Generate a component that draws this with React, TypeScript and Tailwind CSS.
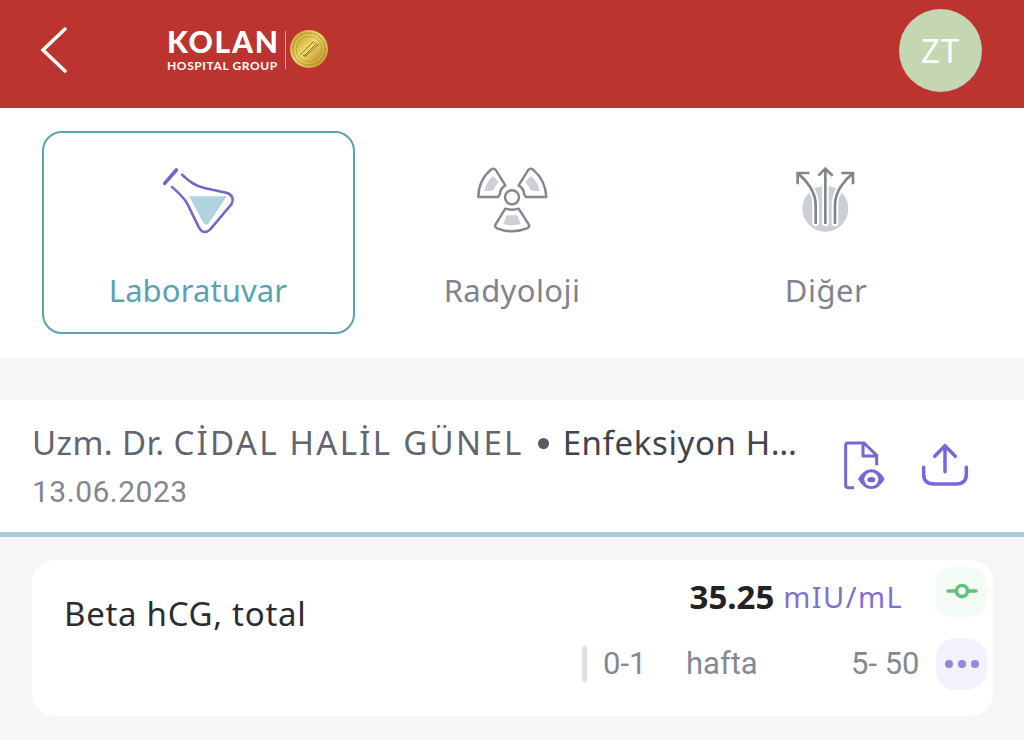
import React from "react";

const FlaskIcon = () => (
  <svg viewBox="54 41 240 210" className="w-20 h-[70px]" fill="none">
    <path d="M148 138H260L207 218Q198 228 190 218Z" fill="#b0d3dd" />
    <g stroke="#7565c6" strokeLinecap="round" strokeLinejoin="round">
      <path d="M74 99L109 59" strokeWidth="11" />
      <path
        d="M96 110C118 129 132 141 143 162L177 232Q191 255 210 238L274 162Q286 139 262 128L193 113C165 107 148 94 126 73"
        strokeWidth="7.5"
      />
    </g>
  </svg>
);

const RadiationIcon = () => (
  <svg viewBox="35 43 240 210" className="w-20 h-[70px]" fill="none">
    <g fill="#cdd0d5">
      <path d="M98 79L115 96L97 123L72 125Q76 98 98 79Z" />
      <path d="M212 79L195 96L213 123L238 125Q234 98 212 79Z" />
      <path d="M139 197H171L181 223Q155 231 129 223Z" />
    </g>
    <g stroke="#84898f" strokeWidth="7.5" strokeLinejoin="round">
      <path d="M92 60Q100 53 107 62L135 107Q119 117 119 133L113 142H54Q54 92 92 60Z" />
      <path d="M218 60Q210 53 203 62L175 107Q191 117 191 133L197 142H258Q256 92 218 60Z" />
      <path d="M135 177Q155 183 175 177L207 227Q207 233 200 236Q155 254 110 236Q104 233 104 227Z" />
      <circle cx="155" cy="143" r="21" />
    </g>
  </svg>
);

const ArrowsIcon = () => (
  <svg viewBox="48 43 240 210" className="w-20 h-[70px]" fill="none">
    <circle cx="166" cy="177" r="69" fill="#ccd0d6" />
    <g stroke="#fff" strokeWidth="20" strokeLinecap="round">
      <path d="M166 220V90" />
      <path d="M137 220V165C137 126 108 90 84 72" />
      <path d="M195 220V165C195 126 224 90 248 72" />
    </g>
    <g stroke="#80868d" strokeWidth="8">
      <path d="M166 223V59M145 78L166 57L188 78" />
      <path d="M137 223V165C137 126 108 90 84 72M83 104V70H118" />
      <path d="M195 223V165C195 126 224 90 248 72M249 104V70H214" />
    </g>
  </svg>
);

const DocumentIcon = () => (
  <svg viewBox="66 56 135 156" className="w-[45px] h-[52px]" fill="none">
    <path
      d="M102 202H84Q77 202 77 195V75Q77 68 84 68H132L170 105V135M129 69V107H168"
      stroke="#7768d1"
      strokeWidth="9"
      strokeLinejoin="round"
    />
    <path d="M114 176Q131 147 154 147T194 176Q177 206 154 206T114 176Z" fill="#7768d1" />
    <circle cx="154" cy="177" r="21" fill="#fff" />
    <ellipse cx="154" cy="178" rx="12" ry="8" fill="#7768d1" />
  </svg>
);

const UploadIcon = () => (
  <svg viewBox="301 66 150 138" className="w-[50px] h-[46px]" fill="none">
    <path
      d="M376 155V78M345 109L376 77L407 109M312 142V162Q312 192 342 192H410Q440 192 440 162V142"
      stroke="#7768d9"
      strokeWidth="10.5"
      strokeLinecap="round"
      strokeLinejoin="round"
    />
  </svg>
);

const SealIcon = () => (
  <svg viewBox="0 0 40 40" className="w-10 h-10" fill="none">
    <defs>
      <linearGradient id="gold" x1="0" y1="0" x2="1" y2="1">
        <stop offset="0" stopColor="#c79b28" />
        <stop offset="0.45" stopColor="#efdb6d" />
        <stop offset="1" stopColor="#c18b20" />
      </linearGradient>
    </defs>
    <circle cx="20" cy="20" r="19" fill="url(#gold)" />
    <circle cx="20" cy="20" r="16" stroke="#76571a" strokeWidth="1.8" strokeDasharray="1.2 1" opacity="0.5" />
    <circle cx="20" cy="20" r="13" fill="url(#gold)" stroke="#b68d29" strokeWidth="0.7" />
    <path d="M11 26L23 14Q25 12 26 14M15 27L28 14M14 26Q15 29 18 26L30 15" stroke="#92702a" strokeWidth="1" />
  </svg>
);

const tabs = [
  { label: "Laboratuvar", icon: <FlaskIcon />, active: true, text: "tracking-[0.1px]" },
  { label: "Radyoloji", icon: <RadiationIcon />, active: false, text: "tracking-[0.4px]" },
  { label: "Diğer", icon: <ArrowsIcon />, active: false, text: "tracking-[0.5px]" },
];

const App = () => {
  return (
    <div className="h-[740px] w-[1024px] overflow-hidden bg-[#f6f6f9] font-['Noto_Sans',sans-serif]">
      {/* Header */}
      <header className="flex h-[107.5px] items-start bg-[#bb342f] pl-10 pr-[42px] text-white">
        <svg viewBox="0 0 28 48" className="mt-[26px] h-12 w-7" fill="none">
          <path d="M25 3L3 24L25 45" stroke="#fff" strokeWidth="3.5" strokeLinecap="round" />
        </svg>
        <div className="ml-[99px] mt-7 flex w-[162px] items-start">
          <div className="-mt-0.5 w-[118px] whitespace-nowrap font-['Lato',sans-serif]">
            <div className="text-[30px] font-black leading-[30px] tracking-[1.7px]">KOLAN</div>
            <div className="mt-1 text-[12px] font-bold leading-[12px] tracking-[0.6px]">HOSPITAL GROUP</div>
          </div>
          <div className="mt-[3px] h-[38px] w-px bg-[#e0a29a]" />
          <div className="ml-[3px] mt-px">
            <SealIcon />
          </div>
        </div>
        <div className="ml-auto mt-[9px] flex h-[83px] w-[83px] items-center justify-center rounded-full bg-[#c5d6b3] text-[33px] tracking-[1px]">
          ZT
        </div>
      </header>

      {/* Tabs */}
      <nav className="flex h-[250.5px] gap-px bg-white px-[41.5px] pt-[23px]">
        {tabs.map((tab) => (
          <button
            key={tab.label}
            className={`flex h-[203px] w-[313px] flex-col items-center rounded-[20px] border-[2.5px] pt-[31px] text-[31px] ${
              tab.active ? "border-[#5ba3ae] text-[#5aa3b0]" : "border-transparent text-[#80848f]"
            }`}
          >
            {tab.icon}
            <span className={`mt-9 leading-10 ${tab.text}`}>{tab.label}</span>
          </button>
        ))}
      </nav>

      {/* Doctor */}
      <section className="mt-[42px] flex h-[137px] border-b-[5px] border-[#a9cad6] bg-white pl-8 pt-[19px]">
        <div className="w-[810px] whitespace-nowrap">
          <div className="flex h-12 items-center text-[33px] leading-[48px]">
            <span className="whitespace-pre text-[#626570]">
              <span className="tracking-[0.4px]">Uzm. Dr. </span>
              <span className="tracking-[2.3px]">CİDAL HALİL GÜNEL</span>
            </span>
            <span className="ml-[14px] mr-[14px] h-[11px] w-[11px] rounded-full bg-[#555a63]" />
            <span className="tracking-[0.6px] text-[#41444d]">Enfeksiyon H…</span>
          </div>
          <div className="mt-[5px] font-['Roboto',sans-serif] text-[30px] leading-10 tracking-[0.5px] text-[#84878f]">
            13.06.2023
          </div>
        </div>
        <div className="mt-[20px] flex items-start">
          <DocumentIcon />
          <span className="ml-[33px] mt-[3px]">
            <UploadIcon />
          </span>
        </div>
      </section>

      {/* Result */}
      <section className="ml-8 mt-[23px] flex h-[156px] w-[961px] whitespace-nowrap rounded-[22px] bg-white pl-8">
        <h2 className="mt-[29px] w-[518px] text-[33px] leading-[50px] tracking-[0.7px] text-[#2b2c30]">
          Beta hCG, total
        </h2>
        <div className="w-[322px]">
          <div className="mt-3 flex h-[50px] items-center justify-end pr-px">
            <strong className="text-[33px] font-bold text-[#222]">35.25</strong>
            <span className="ml-[9px] text-[29px] tracking-[1.4px] text-[#8270cf]">mIU/mL</span>
          </div>
          <div className="mt-[17px] flex h-[50px] items-center font-['Roboto',sans-serif] text-[31px] text-[#858994]">
            <span className="h-9 w-[5px] shrink-0 rounded-sm bg-[#dde2e2]" />
            <span className="ml-4 w-[83px] shrink-0">0-1</span>
            <span className="w-[165px] shrink-0">hafta</span>
            <span className="shrink-0">5- 50</span>
          </div>
        </div>
        <div className="ml-8 mt-[7px]">
          <div className="flex h-[50px] w-[51px] items-center justify-center rounded-2xl bg-[#f4fbf5]">
            <svg viewBox="0 0 32 16" className="mb-0.5 h-4 w-8" fill="none" stroke="#62c17f" strokeWidth="3.5">
              <path d="M2 8H10M22 8H30" strokeLinecap="round" />
              <circle cx="16" cy="8" r="5.5" />
            </svg>
          </div>
          <div className="mt-[21px] flex h-[52px] w-[51px] items-center justify-center gap-[5px] rounded-[20px] bg-[#f3f1fb]">
            <span className="h-2 w-2 rounded-full bg-[#9585dc]" />
            <span className="h-2 w-2 rounded-full bg-[#9585dc]" />
            <span className="h-2 w-2 rounded-full bg-[#9585dc]" />
          </div>
        </div>
      </section>
    </div>
  );
};

export default App;
